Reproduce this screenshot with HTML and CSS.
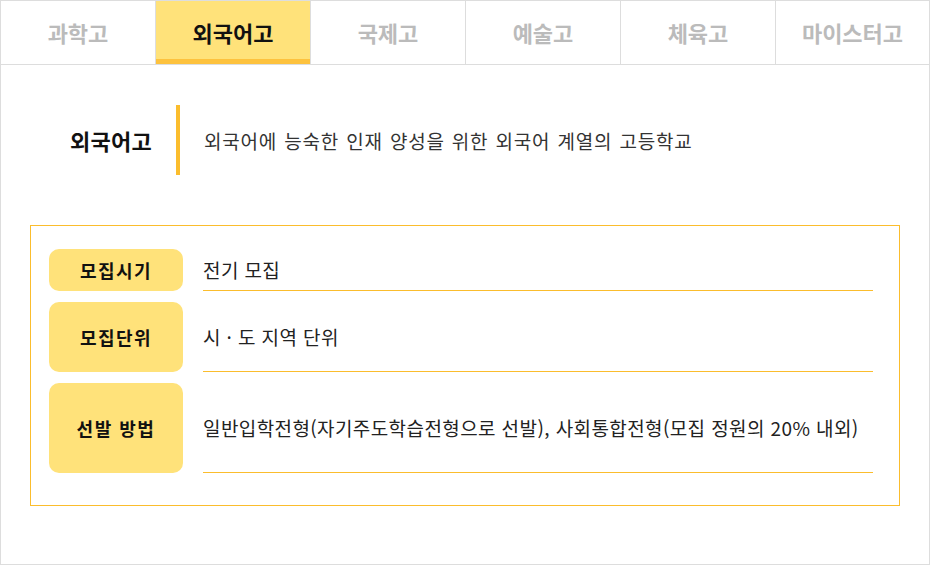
FILE: index.html
```html
<!DOCTYPE html>
<html lang="ko">
<head>
<meta charset="utf-8">
<title>외국어고</title>
<link rel="stylesheet" href="styles.css">
</head>
<body>
<div class="page">
  <ul class="tabs">
    <li class="tab">과학고</li>
    <li class="tab active">외국어고</li>
    <li class="tab">국제고</li>
    <li class="tab">예술고</li>
    <li class="tab">체육고</li>
    <li class="tab">마이스터고</li>
  </ul>
  <div class="intro">
    <h2 class="intro-title">외국어고</h2>
    <span class="intro-bar"></span>
    <p class="intro-desc">외국어에 능숙한 인재 양성을 위한 외국어 계열의 고등학교</p>
  </div>
  <div class="info">
    <div class="row row-s">
      <div class="label">모집시기</div>
      <div class="value">전기 모집</div>
    </div>
    <div class="row row-m">
      <div class="label">모집단위</div>
      <div class="value">시 · 도 지역 단위</div>
    </div>
    <div class="row row-l">
      <div class="label">선발 방법</div>
      <div class="value">일반입학전형(자기주도학습전형으로 선발), 사회통합전형(모집 정원의 20% 내외)</div>
    </div>
  </div>
</div>
</body>
</html>
```
FILE: styles.css
```css
* { box-sizing: border-box; }
html, body { margin: 0; padding: 0; background: #fff; }
body {
  font-family: "Noto Sans CJK KR", "Noto Sans", sans-serif;
  color: #222;
}
.page {
  width: 930px;
  height: 565px;
  border: 1px solid #dddddd;
}
.tabs {
  list-style: none;
  margin: 0;
  padding: 0;
  display: grid;
  grid-template-columns: 154px 155px 155px 155px 155px 154px;
  height: 64px;
  border-bottom: 1px solid #dddddd;
}
.tab {
  display: flex;
  align-items: center;
  justify-content: center;
  font-size: 22px;
  font-weight: 700;
  color: #bbbbbb;
  letter-spacing: 0;
  border-left: 1px solid #dddddd;
  padding-bottom: 1px;
}
.tab:first-child { border-left: 0; }
.tab.active {
  background: #ffe27a;
  color: #111;
  box-shadow: inset 0 -5px 0 #fdc23e;
}
.intro {
  display: flex;
  align-items: center;
  margin: 40px 0 0 69px;
  height: 70px;
}
.intro-title {
  margin: 0;
  font-size: 22px;
  font-weight: 700;
  color: #111;
  letter-spacing: 0.3px;
  width: 106px;
}
.intro-bar {
  width: 4px;
  height: 70px;
  background: #fbbd2d;
}
.intro-desc {
  margin: 0 0 0 24px;
  font-size: 19px;
  color: #333;
  letter-spacing: 0.8px;
  word-spacing: 1px;
}
.info {
  margin: 50px 0 0 29px;
  width: 870px;
  height: 281px;
  border: 1px solid #fbbd2d;
  padding: 23px 26px 0 18px;
  display: flex;
  flex-direction: column;
  gap: 11px;
}
.row {
  display: flex;
  gap: 20px;
}
.row-s { height: 42px; }
.row-m { height: 70px; }
.row-l { height: 90px; }
.label {
  width: 134px;
  flex: none;
  background: #ffe27a;
  border-radius: 10px;
  display: flex;
  align-items: center;
  justify-content: center;
  font-size: 18px;
  font-weight: 700;
  color: #111;
  letter-spacing: 1.5px;
}
.value {
  flex: 1;
  border-bottom: 1px solid #fbbd2d;
  display: flex;
  align-items: center;
  font-size: 19px;
  color: #222;
  letter-spacing: 0.4px;
}
```
